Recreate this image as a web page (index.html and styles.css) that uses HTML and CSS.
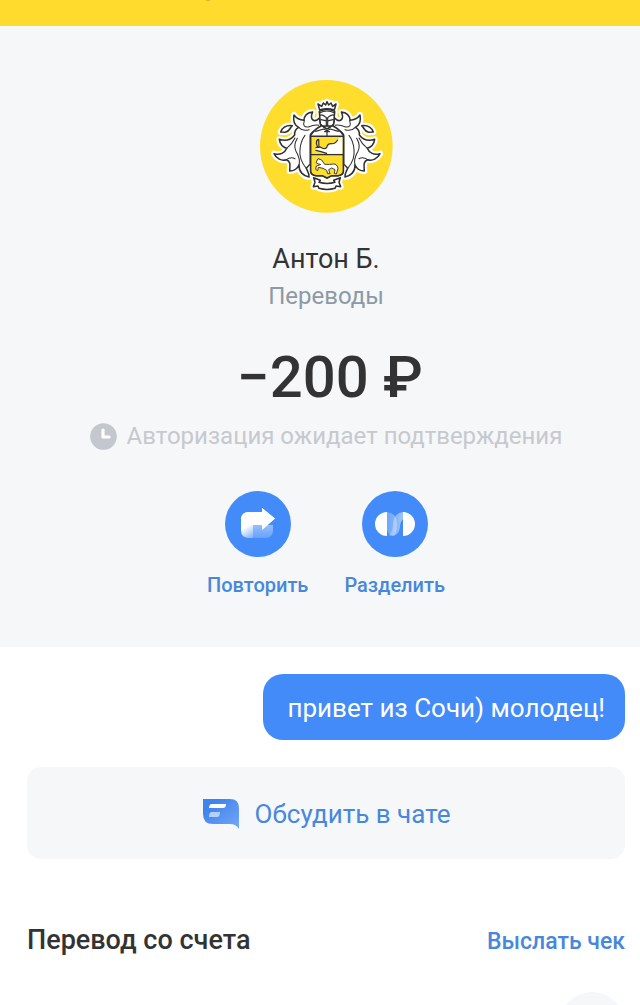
FILE: index.html
```html
<!DOCTYPE html>
<html lang="ru">
<head>
<meta charset="utf-8">
<meta name="viewport" content="width=device-width, initial-scale=1">
<title>Антон Б. — Переводы</title>
<link rel="stylesheet" href="styles.css">
</head>
<body>
<div class="screen">
  <header class="topbar">
    <svg class="topbar-mark" viewBox="0 0 6 2" aria-hidden="true"><path d="M0 0H6Q3 2 0 0Z" fill="#d3b323"/></svg>
  </header>
  <section class="summary">
    <svg class="emblem" viewBox="29 29 399 399" aria-hidden="true">
      <defs>
        <g id="wing">
          <path d="M207 143C194 158 176 150 187 125C171 126 161 137 161 150C149 149 139 145 131 134C127 153 134 165 145 171C136 176 132 185 133 194C120 211 104 213 87 207C89 222 97 230 109 234C104 248 89 255 71 250C78 265 94 273 108 268C122 273 119 286 118 302C130 302 141 295 146 284C145 304 159 317 176 320C178 309 171 303 168 294C172 289 176 284 180 281L180 194C184 183 200 180 212 168Z"/>
          <path d="M91 185C97 170 108 164 126 166C117 174 118 184 105 186Z"/>
        </g>
        <g id="veins">
          <path d="M162 151Q155 172 174 170Q194 162 205 165M145 171Q157 184 176 178M109 234Q125 222 134 203M108 268Q122 258 134 265M146 284Q151 267 137 243Q128 226 141 204M168 294Q145 267 149 237Q151 212 164 195"/>
        </g>
        <path id="body" d="M207 123Q230 112 253 123L250 161Q241 171 230 176Q219 171 210 161ZM212 167Q193 176 181 195V303Q182 313 198 316H216L230 323L244 316H262Q278 313 279 303V195Q267 176 248 167Z"/>
        <path id="crown" d="M208 119L203 101L214 108L219 98L226 104L230 94L235 104L242 98L247 108L257 101L252 119Q230 111 208 119Z"/>
        <path id="ribbon" d="M190 322L210 330L206 336Q230 343 254 336L250 330L270 322L266 336L271 349L257 347L254 354Q230 361 206 354L203 347L189 349L194 336Z"/>
      </defs>
      <circle cx="228" cy="228" r="199" fill="#ffdd2d"/>
      <g fill="#fff" stroke="#fff" stroke-width="18" stroke-linejoin="round">
        <use href="#wing"/><use href="#wing" transform="translate(460 0) scale(-1 1)"/>
        <use href="#body"/><use href="#crown"/><use href="#ribbon"/>
      </g>
      <g fill="#fff" stroke="#303030" stroke-width="4.600" stroke-linejoin="round" stroke-linecap="round">
        <use href="#wing"/><use href="#wing" transform="translate(460 0) scale(-1 1)"/>
        <g fill="none" stroke-width="3.200"><use href="#veins"/><use href="#veins" transform="translate(460 0) scale(-1 1)"/></g>
        <use href="#body"/><use href="#crown"/><use href="#ribbon"/>
        <path d="M181 198H279V303Q278 314 262 316H244L230 323L216 316H198Q182 314 181 303Z" fill="#ffdd2d"/>
        <path d="M276 200V250H232Q221 244 199 241L196 232L209 231Q221 241 230 231Q232 219 243 220Q255 223 263 207Z" stroke="none"/>
        <path d="M197 232L210 230Q222 239 229 232Q232 219 243 220M197 240Q216 244 229 249M201 229L198 218Q199 207 205 207L206 231M243 220Q254 222 262 209M181 253H279" fill="none" stroke-width="3.500"/>
        <path d="M203 280L197 277L203 265L214 269L223 282Q239 283 249 281Q260 280 263 294L258 311L252 309L254 298L244 293L235 298L239 310L232 310L229 300L218 294L204 291L202 301L196 297L198 287L210 283Z" stroke-width="2.800"/>
        <path d="M209 135Q215 130 228 142V167M251 135Q245 130 232 142V167M212 148L225 151M248 148L235 151M207 128Q230 116 253 128M196 183L220 176L230 181L240 176L264 183M223 184H237M230 184V196" fill="none" stroke-width="3.600"/>
      </g>
    </svg>
    <h1 class="name">Антон Б.</h1>
    <p class="category">Переводы</p>
    <p class="amount">−200 ₽</p>
    <p class="status">
      <svg class="clock" viewBox="0 0 27 27" aria-hidden="true"><circle cx="13.500" cy="13.500" r="13.300" fill="#c4c8ce"/><path d="M13 7V14H19" fill="none" stroke="#fff" stroke-width="3.200" stroke-linecap="round" stroke-linejoin="round"/></svg>
      <span>Авторизация ожидает подтверждения</span>
    </p>
    <div class="actions">
      <button class="action" type="button">
        <svg class="action-icon" viewBox="0 0 66 66" aria-hidden="true">
          <defs>
            <linearGradient id="arrowFade" x1="18" y1="28" x2="30" y2="48" gradientUnits="userSpaceOnUse"><stop offset=".35" stop-color="#fff"/><stop offset="1" stop-color="#fff" stop-opacity=".22"/></linearGradient>
            <linearGradient id="tailFade" x1="0" y1="34" x2="0" y2="47" gradientUnits="userSpaceOnUse"><stop stop-color="#fff" stop-opacity=".45"/><stop offset="1" stop-color="#fff" stop-opacity=".2"/></linearGradient>
          </defs>
          <circle cx="33" cy="33" r="33" fill="#428bf9"/>
          <path d="M28 34H48V39Q48 47 40 47H28Z" fill="url(#tailFade)"/>
          <path d="M37 21V17L50 27.500L37 39V34H28V47H24Q16 47 16 39V29Q16 21 24 21Z" fill="url(#arrowFade)"/>
          <path d="M24 21H37V17L50 27.500L37 39V34H16V29Q16 21 24 21Z" fill="#fff"/>
        </svg>
        <span>Повторить</span>
      </button>
      <button class="action" type="button">
        <svg class="action-icon" viewBox="0 0 66 66" aria-hidden="true">
          <defs>
            <linearGradient id="linkLeft"><stop stop-color="#fff" stop-opacity=".25"/><stop offset="1" stop-color="#fff" stop-opacity=".35"/></linearGradient>
            <linearGradient id="linkRight"><stop stop-color="#fff" stop-opacity=".2"/><stop offset="1" stop-color="#fff" stop-opacity=".5"/></linearGradient>
          </defs>
          <circle cx="33" cy="33" r="33" fill="#428bf9"/>
          <path d="M25 21Q35 22 35 33Q35 44 31 45Q25 43 25 38Z" fill="url(#linkLeft)"/>
          <path d="M41 21Q32 22 31 32Q31 42 26 44L29 45Q37 45 38 36Q38 31 41 28Z" fill="url(#linkRight)"/>
          <path d="M25 21A12 12 0 0 0 25 45ZM41 21A12 12 0 0 1 41 45Z" fill="#fff"/>
        </svg>
        <span>Разделить</span>
      </button>
    </div>
  </section>
  <main class="details">
    <p class="message">привет из Сочи) молодец!</p>
    <button class="chat" type="button">
      <svg class="chat-icon" viewBox="0 0 38 32" aria-hidden="true">
        <defs><linearGradient id="bubble" x1="0" y1="0" x2="1" y2="1"><stop offset=".2" stop-color="#3f83ed"/><stop offset="1" stop-color="#76a8f8"/></linearGradient></defs>
        <path d="M1 1H28Q37 1 37 10V31Q34 26 28 26H11Q1 26 1 16Z" fill="url(#bubble)"/>
        <path d="M10 6H24Q24 10 21 10H7Q7 6 10 6Z" fill="#fff"/>
        <path d="M10 14H18Q18 19 15 19H7Q7 14 10 14Z" fill="#b5d0fa"/>
      </svg>
      <span>Обсудить в чате</span>
    </button>
    <div class="account">
      <h2 class="account-title">Перевод со счета</h2>
      <a class="receipt" href="#">Выслать чек</a>
    </div>
    <div class="account-mark"></div>
  </main>
</div>
</body>
</html>
```
FILE: styles.css
```css
* {
  box-sizing: border-box;
  margin: 0;
}

body {
  background: #fff;
  color: #333;
  font-family: Roboto, "Noto Sans", sans-serif;
}

button {
  border: 0;
  padding: 0;
  background: none;
  font: inherit;
  cursor: pointer;
}

.screen {
  height: 100vh;
  overflow: hidden;
}

.topbar {
  display: flex;
  align-items: flex-start;
  height: 26px;
  padding-left: 32%;
  background: #ffdb2d;
}

.topbar-mark {
  width: 6px;
  height: 2px;
}

.summary {
  display: flex;
  flex-direction: column;
  align-items: center;
  padding: 54px 15px 50px 27px;
  background: #f5f7f9;
}

.emblem {
  width: 133px;
  height: 133px;
}

.name {
  margin-top: 30px;
  font-size: 27px;
  font-weight: 400;
  line-height: 32px;
}

.category {
  margin-top: 7px;
  color: #8d99a5;
  font-size: 24px;
  line-height: 28px;
}

.amount {
  margin-top: 32px;
  padding-left: 8px;
  font-size: 58px;
  font-weight: 500;
  line-height: 70px;
}

.status {
  display: flex;
  align-items: center;
  gap: 10px;
  margin-top: 8px;
  color: #c6c9ce;
  font-size: 24px;
  line-height: 32px;
}

.clock {
  width: 27px;
  height: 27px;
}

.actions {
  display: flex;
  gap: 36px;
  margin-top: 39px;
}

.action {
  display: flex;
  flex-direction: column;
  align-items: center;
  gap: 16px;
  color: #4787dc;
  font-size: 20px;
  font-weight: 500;
  line-height: 24px;
}

.action-icon {
  width: 66px;
  height: 66px;
}

.details {
  display: flex;
  flex-direction: column;
  padding: 27px 15px 0 27px;
}

.message {
  align-self: flex-end;
  padding: 18px 20px 16px 24px;
  border-radius: 20px;
  background: #428bf9;
  color: #fff;
  font-size: 26px;
  line-height: 32px;
}

.chat {
  display: flex;
  align-items: center;
  justify-content: center;
  gap: 15px;
  margin-top: 27px;
  padding: 31px 20px 29px;
  border-radius: 14px;
  background: #f5f7f9;
  color: #4787dc;
  font-size: 26px;
  line-height: 32px;
}

.chat-icon {
  width: 38px;
  height: 32px;
}

.account {
  display: flex;
  align-items: baseline;
  justify-content: space-between;
  margin-top: 65px;
}

.account-title {
  font-size: 27px;
  font-weight: 500;
  line-height: 32px;
}

.receipt {
  color: #4787dc;
  font-size: 23px;
  font-weight: 500;
  line-height: 32px;
  text-decoration: none;
}

.account-mark {
  align-self: flex-end;
  width: 66px;
  height: 66px;
  margin-top: 34px;
  border-radius: 50%;
  background: #f5f7f9;
}
```
